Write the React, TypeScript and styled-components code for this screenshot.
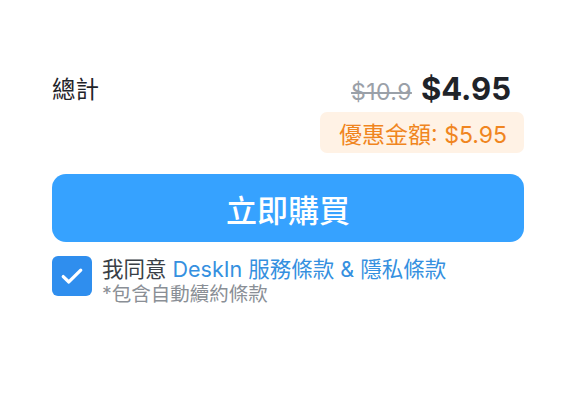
import styled, { createGlobalStyle } from "styled-components";

const GlobalStyle = createGlobalStyle`
  body {
    margin: 0;
    background: #ffffff;
    font-family: Inter, "Noto Sans CJK TC", sans-serif;
    color: #1f2329;
  }
`;

const Page = styled.div`
  width: 576px;
  height: 400px;
  box-sizing: border-box;
  padding: 68px 52px 0;
  display: flex;
  flex-direction: column;
`;

const TotalRow = styled.div`
  display: flex;
  justify-content: space-between;
  align-items: center;
  height: 40px;
`;

const Label = styled.span`
  font-size: 23.5px;
  color: #1f2329;
`;

const Prices = styled.div`
  display: flex;
  align-items: baseline;
  gap: 9px;
  padding-right: 13px;
`;

const OldPrice = styled.span`
  font-size: 23px;
  letter-spacing: 0.4px;
  color: #9aa0a8;
  text-decoration: line-through;
`;

const NewPrice = styled.span`
  font-size: 31px;
  font-weight: 700;
  color: #1f2329;
`;

const Discount = styled.div`
  align-self: flex-end;
  margin-top: 4px;
  height: 41px;
  padding: 0 17px 0 19px;
  display: flex;
  align-items: center;
  border-radius: 7px;
  background: #fff2e5;
  color: #f08520;
  font-size: 23px;
`;

const BuyButton = styled.button`
  margin-top: 21px;
  height: 68px;
  border: none;
  border-radius: 14px;
  background: #36a2ff;
  color: #ffffff;
  font-family: inherit;
  font-size: 31px;
  font-weight: 500;
  cursor: pointer;
`;

const Agreement = styled.div`
  margin-top: 14px;
  display: flex;
  align-items: flex-start;
  gap: 10px;
`;

const Check = styled.div`
  width: 40px;
  height: 40px;
  flex: none;
  border-radius: 6px;
  background: #2f8eee;
  display: flex;
  align-items: center;
  justify-content: center;
`;

const Terms = styled.div`
  display: flex;
  flex-direction: column;
`;

const TermsLine = styled.div`
  font-size: 21.5px;
  line-height: 26px;
  color: #3a3f46;
`;

const TermsLink = styled.span`
  color: #3590e0;
`;

const Note = styled.div`
  font-size: 19.5px;
  line-height: 24px;
  color: #8a8f96;
`;

export default function App() {
  return (
    <>
      <GlobalStyle />
      <Page>
        <TotalRow>
          <Label>總計</Label>
          <Prices>
            <OldPrice>$10.9</OldPrice>
            <NewPrice>$4.95</NewPrice>
          </Prices>
        </TotalRow>
        <Discount>優惠金額: $5.95</Discount>
        <BuyButton>立即購買</BuyButton>
        <Agreement>
          <Check>
            <svg width="28" height="28" viewBox="0 0 24 24" fill="none">
              <path d="M4.5 12.5l4.8 4.6L19.5 7" stroke="#fff" strokeWidth="2.8" strokeLinecap="round" strokeLinejoin="round" />
            </svg>
          </Check>
          <Terms>
            <TermsLine>
              我同意 <TermsLink>DeskIn 服務條款 &amp; 隱私條款</TermsLink>
            </TermsLine>
            <Note>*包含自動續約條款</Note>
          </Terms>
        </Agreement>
      </Page>
    </>
  );
}
